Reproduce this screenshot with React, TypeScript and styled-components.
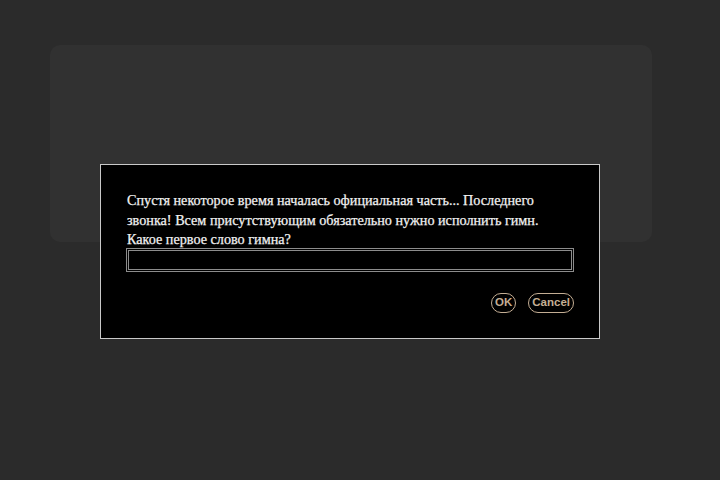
import React from 'react'
import styled, { createGlobalStyle } from 'styled-components'

const GlobalStyle = createGlobalStyle`
  html, body {
    margin: 0;
    padding: 0;
    background: #2b2b2b;
  }
  #root {
    min-height: 480px;
  }
`

const Page = styled.div`
  position: relative;
  width: 720px;
  height: 480px;
  padding: 45px 68px 0 50px;
  box-sizing: border-box;
`

const Panel = styled.div`
  height: 197px;
  background: #313131;
  border-radius: 10px;
`

// prompt dialog sits over the panel
const Dialog = styled.div`
  position: absolute;
  left: 100px;
  top: 164px;
  width: 500px;
  height: 175px;
  box-sizing: border-box;
  background: #000;
  border: 1px solid #c9c9c9;
  padding: 26px 25px 0 26px;
  display: flex;
  flex-direction: column;
`

const Message = styled.p`
  margin: 0;
  font-family: 'Liberation Serif', 'DejaVu Serif', serif;
  font-size: 14.2px;
  line-height: 19.5px;
  color: #f2f2f2;
  -webkit-text-stroke: 0.25px #f2f2f2;
`

const Field = styled.input`
  display: block;
  width: 448px;
  height: 24px;
  margin: -2px 0 0 -1px;
  box-sizing: border-box;
  background: #000;
  border: 3px double #8c8c8c;
  color: #fff;
  font-family: 'Liberation Serif', serif;
  font-size: 14px;
  padding: 0 4px;
  outline: none;
`

const Actions = styled.div`
  display: flex;
  justify-content: flex-end;
  gap: 12px;
  margin-top: 21px;
`

const Button = styled.button`
  height: 20px;
  padding: 0 3px;
  background: #000;
  border: 1.5px solid #c4ae94;
  border-radius: 10px;
  color: #c4ae94;
  font-family: 'Liberation Sans', Arial, sans-serif;
  font-weight: bold;
  font-size: 11.5px;
  line-height: 1;
  cursor: pointer;
`

export default function App() {
  return (
    <>
      <GlobalStyle />
      <Page>
        <Panel />
        <Dialog>
          <Message>
            Спустя некоторое время началась официальная часть... Последнего звонка! Всем
            присутствующим обязательно нужно исполнить гимн. Какое первое слово гимна?
          </Message>
          <Field type="text" />
          <Actions>
            <Button>OK</Button>
            <Button>Cancel</Button>
          </Actions>
        </Dialog>
      </Page>
    </>
  )
}
